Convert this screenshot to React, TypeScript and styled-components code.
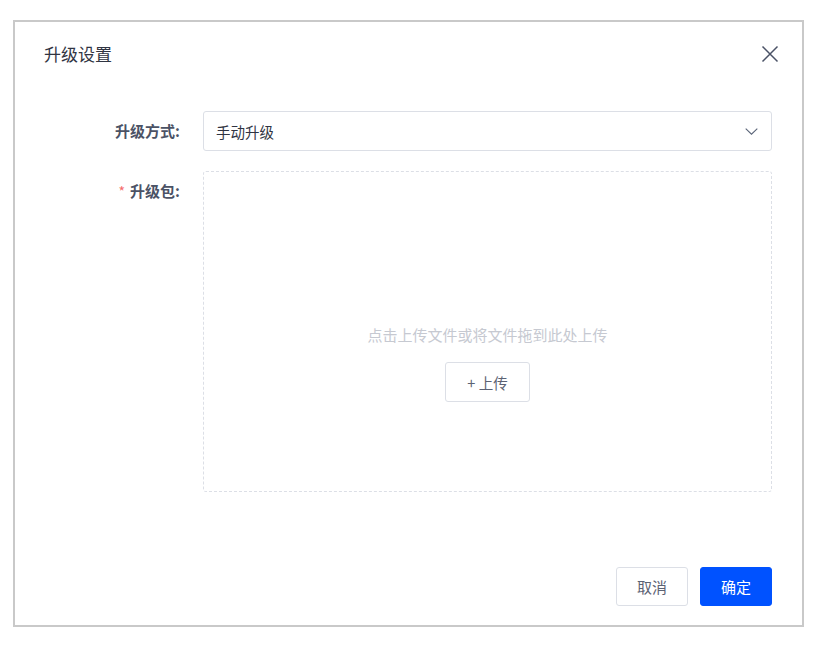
import React, { useState } from "react";
import styled, { createGlobalStyle } from "styled-components";

const GlobalStyle = createGlobalStyle`
  html, body {
    margin: 0;
    padding: 0;
    background: #ffffff;
  }
  body {
    font-family: "Noto Sans CJK SC", "Noto Sans", Inter, sans-serif;
    font-size: 14px;
    color: #333;
  }
`;

const Page = styled.div`
  padding: 20px 0 0 13px;
`;

const Dialog = styled.div`
  box-sizing: border-box;
  width: 791px;
  height: 607px;
  border: 2px solid #c9c9c9;
  background: #fff;
  display: flex;
  flex-direction: column;
`;

const Header = styled.div`
  display: flex;
  align-items: center;
  justify-content: space-between;
  padding: 20px 22px 20px 29px;
`;

const Title = styled.div`
  font-size: 17px;
  line-height: 24px;
  color: #303442;
`;

const CloseButton = styled.button`
  border: none;
  background: none;
  padding: 0;
  width: 20px;
  height: 20px;
  display: flex;
  align-items: center;
  justify-content: center;
  cursor: pointer;
`;

const Body = styled.div`
  padding: 25px 30px 0 30px;
  display: flex;
  flex-direction: column;
  gap: 20px;
`;

const Row = styled.div`
  display: grid;
  grid-template-columns: 158px 1fr;
  align-items: start;
`;

const Label = styled.div<{ $required?: boolean }>`
  text-align: right;
  padding-right: 23px;
  line-height: 40px;
  font-weight: 700;
  color: #4b5265;
  font-size: 15px;

  &::before {
    content: ${({ $required }) => ($required ? '"*"' : '""')};
    color: #f56c6c;
    margin-right: 5px;
    font-weight: 400;
    font-size: 14px;
  }
`;

const Select = styled.div`
  box-sizing: border-box;
  height: 40px;
  border: 1px solid #dcdfe6;
  border-radius: 3px;
  display: flex;
  align-items: center;
  justify-content: space-between;
  padding: 0 13px 0 12px;
  color: #303442;
  font-size: 14.5px;
  cursor: pointer;
`;

const Dropzone = styled.div`
  box-sizing: border-box;
  height: 321px;
  border: 1px dashed #dcdfe6;
  border-radius: 3px;
  display: flex;
  flex-direction: column;
  align-items: center;
  justify-content: center;
  gap: 17px;
  padding-top: 64px;
`;

const Hint = styled.div`
  color: #c6c9d1;
  font-size: 15px;
  line-height: 20px;
`;

const Button = styled.button<{ $primary?: boolean }>`
  box-sizing: border-box;
  height: 40px;
  padding: 0 20px;
  border-radius: 3px;
  font-family: inherit;
  font-size: 15px;
  cursor: pointer;
  border: 1px solid ${({ $primary }) => ($primary ? "#0052ff" : "#dcdfe6")};
  background: ${({ $primary }) => ($primary ? "#0052ff" : "#fff")};
  color: ${({ $primary }) => ($primary ? "#fff" : "#5c6273")};
`;

const UploadButton = styled(Button)`
  width: 85px;
  padding: 0;
  font-size: 14.5px;
`;

const Footer = styled.div`
  margin-top: auto;
  display: flex;
  justify-content: flex-end;
  gap: 12px;
  padding: 0 30px 19px 0;
`;

const FooterButton = styled(Button)`
  width: 72px;
  height: 39px;
  padding: 0;
`;

const CloseIcon = () => (
  <svg width="18" height="18" viewBox="0 0 18 18">
    <path d="M1.5 1.5 L16.5 16.5 M16.5 1.5 L1.5 16.5" stroke="#4a5266" strokeWidth="1.5" fill="none" />
  </svg>
);

const ChevronDown = () => (
  <svg width="13" height="7" viewBox="0 0 13 7">
    <path d="M0.7 0.7 L6.5 6.2 L12.3 0.7" stroke="#5a6478" strokeWidth="1.1" fill="none" />
  </svg>
);

export default function App() {
  const [mode] = useState("手动升级");

  return (
    <>
      <GlobalStyle />
      <Page>
        <Dialog>
          <Header>
            <Title>升级设置</Title>
            <CloseButton aria-label="close">
              <CloseIcon />
            </CloseButton>
          </Header>
          <Body>
            <Row>
              <Label>升级方式:</Label>
              <Select>
                <span>{mode}</span>
                <ChevronDown />
              </Select>
            </Row>
            <Row>
              <Label $required>升级包:</Label>
              <Dropzone>
                <Hint>点击上传文件或将文件拖到此处上传</Hint>
                <UploadButton>+ 上传</UploadButton>
              </Dropzone>
            </Row>
          </Body>
          <Footer>
            <FooterButton>取消</FooterButton>
            <FooterButton $primary>确定</FooterButton>
          </Footer>
        </Dialog>
      </Page>
    </>
  );
}
